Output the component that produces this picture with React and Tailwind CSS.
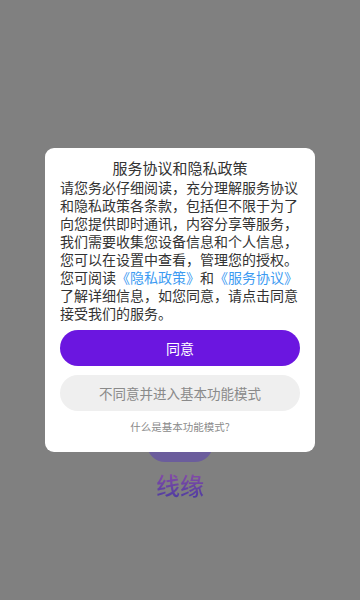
import React from "react";

const cjk = { fontFamily: '"Noto Sans CJK SC", "Noto Sans", sans-serif' };

function Splash() {
  return (
    <div className="w-full h-[600px] bg-[#808080] flex flex-col items-center pt-[396px]">
      {/* logo tile, mostly hidden behind the dialog */}
      <div className="w-[66px] h-[66px] rounded-[18px] bg-[#6b5d9c]" />
      <div className="mt-[8px] text-[24px] leading-[30px] font-medium bg-gradient-to-b from-[#8d4ca8] to-[#4a3aa0] bg-clip-text text-transparent">
        线缘
      </div>
    </div>
  );
}

export default function App() {
  return (
    <div className="relative w-full h-[600px] overflow-hidden" style={cjk}>
      <Splash />

      {/* PRIVACY DIALOG */}
      <div className="absolute inset-0 flex items-center justify-center">
        <div className="w-[270px] bg-white rounded-[9px] px-[15px] pt-[10px] pb-[17px] flex flex-col items-center">
          <h2 className="text-[15px] leading-[20px] text-[#333]">
            服务协议和隐私政策
          </h2>

          <p className="w-[240px] text-[14px] leading-[18px] text-[#333]">
            请您务必仔细阅读，充分理解服务协议
            <br />
            和隐私政策各条款，包括但不限于为了
            <br />
            向您提供即时通讯，内容分享等服务，
            <br />
            我们需要收集您设备信息和个人信息，
            <br />
            您可以在设置中查看，管理您的授权。
            <br />
            您可阅读<span className="text-[#3d9bf2]">《隐私政策》</span>和
            <span className="text-[#3d9bf2]">《服务协议》</span>
            <br />
            了解详细信息，如您同意，请点击同意
            <br />
            接受我们的服务。
          </p>

          <button className="mt-[8px] w-[240px] h-[36px] rounded-full bg-[#6b16e0] text-white text-[14px]">
            同意
          </button>

          <button className="mt-[9px] w-[240px] h-[36px] rounded-full bg-[#efefef] text-[#8a8a8a] text-[13.5px]">
            不同意并进入基本功能模式
          </button>

          <p className="mt-[8px] text-[10.5px] leading-[16px] text-[#8a8a8a]">
            什么是基本功能模式?
          </p>
        </div>
      </div>
    </div>
  );
}
